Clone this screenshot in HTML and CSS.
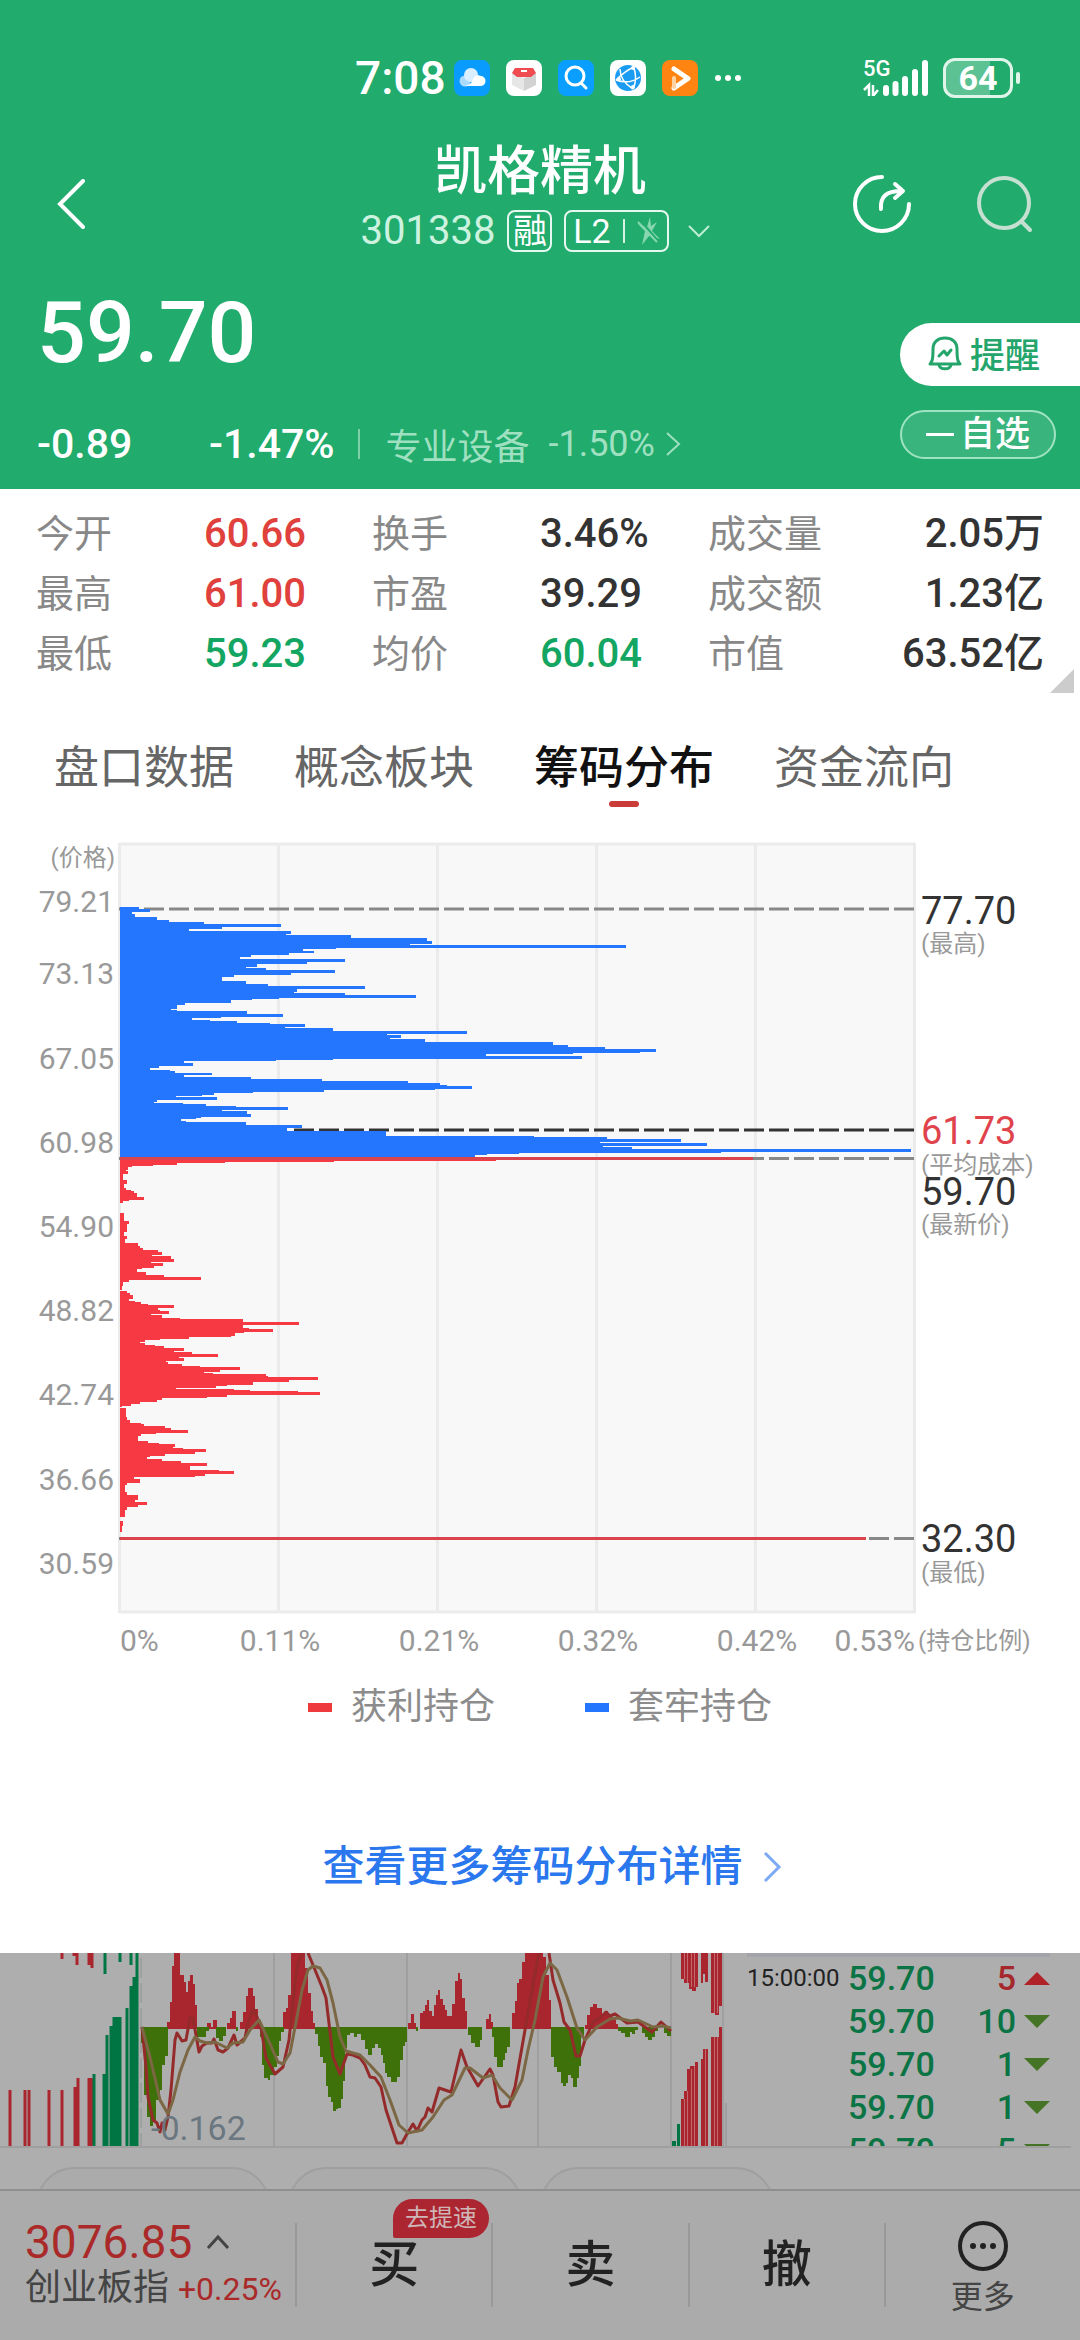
FILE: index.html
```html
<!doctype html>
<html lang="zh-CN">
  <head>
    <meta charset="UTF-8" />
    <meta name="viewport" content="width=device-width, initial-scale=1.0" />
    <title>凯格精机 301338 - 筹码分布</title>
    <link rel="stylesheet" href="styles.css">
  </head>
  <body>
    <header class="header">
      <div class="status">
        <div class="status-left">
          <span class="clock">7:08</span>
          <svg class="app" viewBox="0 0 36 36">
            <rect width="36" height="36" rx="8" fill="#0a9bff" />
            <circle cx="11" cy="21" r="5.500" fill="#a9dbff" />
            <circle cx="17" cy="15" r="7" fill="#d9efff" />
            <path d="M11 26h15a5 5 0 0 0 1-10c-4-2-7 1-8 3-1 4-4 6-8 7z" fill="#fff" />
          </svg>
          <svg class="app" viewBox="0 0 36 36">
            <rect width="36" height="36" rx="8" fill="#fff" />
            <path d="M6 13l12 5v13L6 25z" fill="#e6e6e6" />
            <path d="M30 13l-12 5v13l12-6z" fill="#d2d2d2" />
            <path d="M9 8h18l3 5-5 4H11l-5-4z" fill="#ef4b50" />
            <path d="M15 11h6" stroke="#fff" stroke-width="2" />
          </svg>
          <svg class="app" viewBox="0 0 36 36">
            <rect width="36" height="36" rx="8" fill="#0a9eff" />
            <circle cx="17" cy="16" r="9" fill="none" stroke="#fff" stroke-width="3" />
            <path d="M23 23l5 5" stroke="#fff" stroke-width="3" stroke-linecap="round" />
          </svg>
          <svg class="app" viewBox="0 0 36 36">
            <rect width="36" height="36" rx="8" fill="#fff" />
            <circle cx="18" cy="18" r="13" fill="#1b9cf2" />
            <path d="M6 20C12 14 17 10 24 7M10 9c0 9 5 15 13 20M23 5c3 8 4 16 0 24M6 20c8 3 17 2 24-3" fill="none" stroke="#fff" stroke-width="1.500" />
            <circle cx="23" cy="8" r="2" fill="#fff" />
            <circle cx="9" cy="19" r="2" fill="#fff" />
            <circle cx="23" cy="27" r="2" fill="#fff" />
          </svg>
          <svg class="app" viewBox="0 0 36 36">
            <rect width="36" height="36" rx="8" fill="#ff8412" />
            <path d="M12 9l14 9.500L12 28" fill="none" stroke="#fff" stroke-width="5" stroke-linejoin="round" stroke-linecap="round" />
            <path d="M12 18v9" stroke="#ffd2a3" stroke-width="4" stroke-linecap="round" />
          </svg>
          <svg class="dots" viewBox="0 0 28 8">
            <circle cx="4" cy="4" r="3" /><circle cx="14" cy="4" r="3" /><circle cx="24" cy="4" r="3" />
          </svg>
        </div>
        <div class="status-right">
          <div class="signal">
            <span class="net">5G</span>
            <svg class="bars" viewBox="0 0 66 36">
              <path d="M23 28v5M32.500 24v9M42 19v14M52 12v21M62 3v30" stroke="#fff" stroke-width="6" stroke-linecap="round" />
              <path d="M1 30l5-5v11M10 25v11l5-6" fill="none" stroke="#fff" stroke-width="2.500" />
            </svg>
          </div>
          <span class="battery">64</span>
        </div>
      </div>

      <nav class="nav">
        <button class="icon-btn back" aria-label="返回">
          <svg width="30" height="50" viewBox="0 0 30 50"><path d="M27 2L4 25l23 23" fill="none" stroke="#fff" stroke-width="4" stroke-linecap="round" /></svg>
        </button>
        <div class="title">
          <h1>凯格精机</h1>
          <div class="code">
            <span class="code-num">301338</span>
            <span class="tag tag-rong">融</span>
            <span class="tag tag-l2">L2
              <i></i>
              <svg width="24" height="28" viewBox="0 0 24 28"><path d="M13 0l-3 10-9-3 7 7-3 14 7-9 11 3-8-8 5-9-6 4z" fill="#86d6af" /><path d="M3 3l19 22" stroke="#21ab6d" stroke-width="2" /><path d="M1 5l19 20" stroke="#86d6af" stroke-width="2" /></svg>
            </span>
            <svg class="down" width="24" height="14" viewBox="0 0 24 14"><path d="M2 2l10 10L22 2" fill="none" stroke="#bdeed5" stroke-width="2" /></svg>
          </div>
        </div>
        <div class="nav-right">
          <button class="icon-btn" aria-label="分享">
            <svg width="60" height="60" viewBox="0 0 60 60" fill="none" stroke="#fff" stroke-width="4" stroke-linecap="round" stroke-linejoin="round">
              <path d="M30 3a27 27 0 1 0 27 27" />
              <path d="M29 35c-1-13 6-18 20-18M43 10l8 7-8 7" />
            </svg>
          </button>
          <button class="icon-btn" aria-label="搜索">
            <svg width="60" height="60" viewBox="0 0 60 60" fill="none" stroke="#c5e0d0" stroke-width="4" stroke-linecap="round">
              <circle cx="30" cy="29" r="25" />
              <path d="M48 48l8 8" />
            </svg>
          </button>
        </div>
      </nav>

      <section class="quote">
        <div class="quote-left">
          <div class="price">59.70</div>
          <div class="change">
            <span class="diff">-0.89</span>
            <span class="pct">-1.47%</span>
            <a class="sector" href="#sector">
              <span>专业设备</span>
              <span class="sector-pct">-1.50%</span>
              <svg width="16" height="24" viewBox="0 0 16 24"><path d="M2 1l12 11L2 23" fill="none" stroke="#9fe0c1" stroke-width="2" /></svg>
            </a>
          </div>
        </div>
        <div class="quote-right">
          <button class="remind">
            <svg width="34" height="36" viewBox="0 0 34 36" fill="none" stroke="#24a56b" stroke-width="3" stroke-linejoin="round" stroke-linecap="round">
              <path d="M2 29c2-2 3-4 3-15C5 7 10 3 17 3s12 4 12 11c0 11 1 13 3 15z" />
              <path d="M11 30c1 5 11 5 12 0M11 21l5-5 3 4 4-5" />
            </svg>
            提醒
          </button>
          <button class="fav"><i></i>自选</button>
        </div>
      </section>
    </header>

    <main class="sheet">
      <section class="stats">
        <table>
          <tr>
            <td>今开</td><td class="num up">60.66</td>
            <td>换手</td><td class="num">3.46%</td>
            <td>成交量</td><td class="num last">2.05万</td>
          </tr>
          <tr>
            <td>最高</td><td class="num up">61.00</td>
            <td>市盈</td><td class="num">39.29</td>
            <td>成交额</td><td class="num last">1.23亿</td>
          </tr>
          <tr>
            <td>最低</td><td class="num down-c">59.23</td>
            <td>均价</td><td class="num down-c">60.04</td>
            <td>市值</td><td class="num last">63.52亿</td>
          </tr>
        </table>
        <svg class="corner" viewBox="0 0 24 24"><path d="M24 0v24H0z" fill="#ccc" /></svg>
      </section>

      <div class="tabs">
        <button class="tab">盘口数据</button>
        <button class="tab">概念板块</button>
        <button class="tab active">筹码分布</button>
        <button class="tab">资金流向</button>
      </div>

      <!-- 筹码分布图 -->
      <svg class="chart" viewBox="0 830 1080 840">
        <rect x="119" y="843" width="796" height="769" fill="#f8f8f8" />
        <path class="grid" d="M119 844H915M119 1612H916M119.500 843V1613M278.500 843V1612M437.500 843V1612M596.500 843V1612M755.500 843V1612M914.500 843V1613" />
        <path class="dash" d="M119 909H914M119 1158.500H914M119 1538.500H914" />
        <path class="dash mean" d="M294 1130H914" />
        <!-- 套牢 -->
        <path fill="#2476ff" d="M120 907H139V909H150V912H132V914H135V917H157V920H169V922H204V924H281V927H222V929H189V931H291V934H286V935H351V938H427V941H432V944H410V945H626V948H336V949H303V951H314V953H289V955H251V957H240V959H345V962H307V964H257V967H246V968H266V970H335V973H291V975H234V977H222V981H246V984H268V986H365V989H297V992H294V993H345V995H416V998H279V999H252V1000H231V1003H185V1005H177V1009H171V1010H177V1011H247V1014H283V1017H221V1018H192V1020H210V1021H237V1023H270V1024H305V1027H285V1028H333V1031H467V1034H387V1035H401V1038H390V1039H425V1042H553V1045H568V1047H605V1049H656V1052H640V1053H573V1054H486V1056H582V1059H333V1060H276V1061H184V1063H193V1066H159V1068H150V1070H170V1071H175V1073H212V1075H184V1077H251V1079H322V1081H408V1083H440V1085H447V1086H472V1089H435V1090H324V1092H253V1093H214V1095H202V1096H176V1097H217V1100H157V1102H154V1103H183V1104H206V1106H236V1107H288V1110H222V1111H247V1114H251V1117H201V1118H196V1119H181V1121H186V1122H246V1125H302V1128H287V1131H386V1136H534V1137H607V1139H681V1142H600V1143H707V1146H603V1147H632V1149H911V1152H721V1153H519V1154H487V1155H475V1157H120Z" />
        <!-- 获利 -->
        <path fill="#f63942" d="M120 1157H753V1160H496V1161H334V1162H225V1163H177V1165H153V1166H132V1167H128V1170H126V1171H128V1174H123V1180H127V1184H124V1188H126V1190H131V1191H134V1193H137V1197H144V1200H129V1201H123V1203H120ZM120 1213H124V1221H129V1224H127V1232H124V1236H127V1239H125V1243H138V1246H140V1248H143V1250H158V1252H162V1255H152V1256H171V1259H174V1262H151V1263H163V1266H154V1268H142V1269H137V1272H146V1275H164V1277H201V1280H129V1282H123V1286H122V1290H120ZM120 1291H127V1293H130V1295H133V1299H129V1301H135V1302H141V1304H148V1305H174V1308H158V1310H160V1311H169V1314H151V1315H162V1318H180V1319H243V1322H299V1325H243V1328H249V1329H273V1332H244V1333H235V1336H231V1337H189V1339H160V1340H145V1342H140V1343H145V1345H155V1346H164V1348H184V1351H174V1352H192V1354H218V1357H179V1358H184V1361H166V1362H168V1364H182V1366H200V1367H240V1370H220V1372H204V1373H213V1374H266V1376H268V1377H318V1380H289V1382H253V1385H227V1386H216V1388H176V1389H234V1390H250V1391H298V1392H320V1395H227V1397H207V1398H162V1400H157V1402H140V1404H131V1406H122V1407H120ZM120 1408H126V1417H127V1420H130V1423H141V1424H144V1426H165V1428H171V1430H188V1433H156V1434H141V1436H138V1441H148V1443H159V1444H175V1447H173V1448H183V1449H206V1452H195V1454H165V1456H150V1457H147V1459H162V1461H181V1463H207V1466H190V1470H219V1471H234V1474H205V1476H195V1477H134V1479H140V1483H127V1485H125V1492H127V1495H138V1500H135V1502H147V1505H138V1507H127V1510H125V1517H120ZM120 1521H123V1526H122V1532H120ZM120 1537H866V1540H120Z" />
        <path d="M120 1158.500H753M120 1538.500H866" stroke="#d9434d" stroke-width="3" />

        <g class="axis" text-anchor="end">
          <text class="note" x="115" y="866">(价格)</text>
          <text x="114" y="912">79.21</text>
          <text x="114" y="984">73.13</text>
          <text x="114" y="1069">67.05</text>
          <text x="114" y="1153">60.98</text>
          <text x="114" y="1237">54.90</text>
          <text x="114" y="1321">48.82</text>
          <text x="114" y="1405">42.74</text>
          <text x="114" y="1490">36.66</text>
          <text x="114" y="1574">30.59</text>
        </g>
        <g class="marks">
          <text x="921" y="924">77.70</text>
          <text class="note" x="921" y="952">(最高)</text>
          <text class="note" x="921" y="1173">(平均成本)</text>
          <text class="avg" x="921" y="1144">61.73</text>
          <text x="921" y="1205">59.70</text>
          <text class="note" x="921" y="1233">(最新价)</text>
          <text x="921" y="1552">32.30</text>
          <text class="note" x="921" y="1581">(最低)</text>
        </g>
        <g class="axis" text-anchor="middle">
          <text x="120" y="1651" text-anchor="start">0%</text>
          <text x="280" y="1651">0.11%</text>
          <text x="439" y="1651">0.21%</text>
          <text x="598" y="1651">0.32%</text>
          <text x="757" y="1651">0.42%</text>
          <text x="915" y="1651" text-anchor="end">0.53%</text>
          <text class="note" x="918" y="1649" text-anchor="start">(持仓比例)</text>
        </g>
      </svg>

      <div class="legend">
        <span class="legend-item"><i class="red"></i>获利持仓</span>
        <span class="legend-item"><i class="blue"></i>套牢持仓</span>
      </div>

      <a class="more-link" href="#chips">
        查看更多筹码分布详情
        <svg width="20" height="32" viewBox="0 0 20 32"><path d="M3 2l14 14L3 30" fill="none" stroke="#7daaf4" stroke-width="3" /></svg>
      </a>
    </main>

    <!-- 遮罩下的分时页 -->
    <section class="under">
      <div class="under-main">
        <svg class="macd" viewBox="0 0 730 194">
          <path stroke="#9f9f9f" stroke-width="2" d="M274 0V194M407 0V194M538 0V194M671 0V194M723 0V194M726 150V194" />
          <path stroke="#9f9f9f" stroke-width="2" stroke-dasharray="20 5" d="M141 5V194" />
          <path stroke="#a9262f" stroke-width="3" d="M62 0V6M74 0V3M77 0V12M89 0V12M92 0V15M10 137V193M25 137V193M29 137V193M49 137V193M62 137V193M75 134V193M78 125V193M89 125V193M92 125V193" />
          <path stroke="#007544" stroke-width="3" d="M105 0V21M120 0V9M131 0V12M94 121V193M104 121V193M107 82V193M111 73V193M114 64V193M117 64V193M120 64V193M127 55V193M131 33V193M134 24V193M137 0V193" />
          <g fill="#a9262f">
            <path d="M167 76V69H170V49H172V13H174V0H180V22H184V29H186V39H188V28H190V22H193V31H195V52H197V76ZM207 76V70H211V74H213V67H217V76ZM227 76V70H230V65H232V58H236V76ZM240 76V69H243V59H246V43H248V35H253V43H255V56H258V67H261V76ZM283 76V59H286V55H288V42H291V0H305V15H308V40H311V58H313V70H315V76Z" />
            <path d="M408 76V70H411V61H414V70H416V76ZM420 76V60H423V58H425V52H427V47H429V58H432V63H434V52H436V42H438V37H440V46H443V52H445V57H447V63H452V51H455V28H458V20H460V26H462V45H465V58H467V76ZM486 76V66H489V61H491V69H493V76ZM512 76V60H515V48H517V30H519V26H522V9H525V0H543V4H546V22H549V47H551V76ZM585 76V72H587V62H590V54H593V51H597V55H602V62H605V58H608V63H612V66H616V71H618V76Z" />
            <path d="M681 0V26H684V30H689V36H692V38H696V34H698V0ZM701 0V30H703V21H705V29H708V0ZM711 0V60H715V62H719V53H722V0ZM681 193V146H684V138H687V116H690V113H695V109H698V193ZM701 193V106H703V96H708V193ZM711 193V84H719V74H722V193Z" />
          </g>
          <path stroke="#c0696e" stroke-width="1" d="M684.500 0V26M687.500 0V30M691.500 0V34M694.500 0V34M684.500 146V193M687.500 138V193M691.500 116V193M694.500 113V193M705.500 96V193M714.500 0V60M717.500 0V60M714.500 84V193M717.500 84V193" />
          <g fill="#3e7109">
            <path d="M141 74V90H144V142H147V164H150V173H153V167H156V147H160V137H162V112H165V103H168V74ZM197 74V84H206V78H209V74ZM216 74V85H219V88H223V83H226V74ZM236 74V78H238V74ZM260 74V84H262V112H264V125H268V127H270V122H274V114H277V103H279V88H281V79H284V74ZM315 74V81H318V93H320V104H323V110H326V133H328V144H331V149H333V158H336V156H338V155H341V146H343V128H345V95H347V82H350V80H354V84H357V81H361V87H365V96H368V102H372V95H375V91H378V95H381V102H383V110H385V120H387V124H391V129H397V124H400V107H403V93H405V89H407V74Z" />
            <path d="M416 74V78H418V74ZM468 74V82H471V90H475V94H480V87H482V74ZM492 74V84H494V104H497V114H503V107H505V100H507V94H510V74ZM551 74V104H554V114H557V119H561V130H563V133H566V130H568V122H571V125H573V134H577V125H579V113H581V84H584V74ZM618 74V78H621V80H625V84H630V79H632V81H635V77H638V74ZM642 74V80H645V84H648V87H652V84H655V78H658V74ZM664 74V80H667V83H671V74Z" />
          </g>
          <path fill="#007544" d="M672 193V188H676V193ZM677 193V171H680V193Z" />
          <polyline class="line dif" points="142,74 146,114 148,144 153,167 157,170 160,179 162,170 165,177 168,164 171,137 175,87 177,80 182,88 186,87 190,65 193,65 199,99 202,93 207,90 212,90 214,86 218,97 223,99 228,95 234,82 237,92 245,85 248,70 253,56 257,64 261,75 266,105 275,121 283,114 289,87 295,30 298,9 303,0" />
          <polyline class="line dif" points="308,0 313,12 322,34 326,45 333,104 340,121 347,101 353,102 360,105 365,112 370,124 375,125 381,134 386,157 397,190 402,190 408,179 413,171 417,178 422,167 425,164 428,155 432,159 439,135 451,139 461,97 467,114 478,133 490,116 493,122 498,149 501,154 509,153 515,134 525,77 532,37 538,4 540,0" />
          <polyline class="line dif" points="549,0 553,27 560,50 564,69 570,77 576,103 580,103 585,87 593,69 600,65 606,59 610,63 615,61 627,70 638,69 652,79 661,69 671,78" />
          <polyline class="line dea" points="142,74 150,104 160,147 168,161 173,147 180,119 188,97 195,84 200,88 207,90 215,89 227,95 233,90 243,89 250,77 259,67 267,84 278,109 283,111 290,100 297,64 302,37 308,17 313,13 320,15 327,27 333,50 340,84 346,98 360,102 370,112 381,124 390,147 399,172 408,180 422,177 433,164 444,147 452,142 465,115 470,115 483,125 492,122 500,135 512,147 522,127 528,97 535,67 543,24 550,10 557,17 567,44 577,75 585,87 597,74 610,66 618,65 630,68 638,67 653,74 663,73 671,75" />
          <text class="macd-min" x="151" y="187">-0.162</text>
        </svg>
        <table class="ticks">
          <tr><td class="time">15:00:00</td><td>59.70</td><td class="vol red-c">5</td><td class="arrow"><svg width="26" height="13" viewBox="0 0 26 13"><path d="M13 0l13 13H0z" fill="#b02228" /></svg></td></tr>
          <tr><td></td><td>59.70</td><td class="vol">10</td><td class="arrow"><svg width="26" height="13" viewBox="0 0 26 13"><path d="M0 0h26L13 13z" fill="#457426" /></svg></td></tr>
          <tr><td></td><td>59.70</td><td class="vol">1</td><td class="arrow"><svg width="26" height="13" viewBox="0 0 26 13"><path d="M0 0h26L13 13z" fill="#457426" /></svg></td></tr>
          <tr><td></td><td>59.70</td><td class="vol">1</td><td class="arrow"><svg width="26" height="13" viewBox="0 0 26 13"><path d="M0 0h26L13 13z" fill="#457426" /></svg></td></tr>
          <tr><td></td><td>59.70</td><td class="vol">5</td><td class="arrow"><svg width="26" height="13" viewBox="0 0 26 13"><path d="M0 0h26L13 13z" fill="#457426" /></svg></td></tr>
        </table>
      </div>
      <div class="pills"><i></i><i></i><i></i></div>
    </section>

    <footer class="bottom">
      <a class="index" href="#index">
        <span class="index-top">3076.85
          <svg width="24" height="16" viewBox="0 0 24 16"><path d="M2 14L12 3l10 11" fill="none" stroke="#444" stroke-width="3" /></svg>
        </span>
        <span class="index-sub">创业板指 <b>+0.25%</b></span>
      </a>
      <button class="act">买<span class="speed">去提速</span></button>
      <button class="act">卖</button>
      <button class="act">撤</button>
      <button class="act more">
        <svg width="52" height="52" viewBox="0 0 52 52"><circle cx="26" cy="26" r="23" fill="none" stroke="#222" stroke-width="4" /><circle cx="16" cy="26" r="3" fill="#222" /><circle cx="26" cy="26" r="3" fill="#222" /><circle cx="36" cy="26" r="3" fill="#222" /></svg>
        更多
      </button>
    </footer>
  </body>
</html>
```
FILE: styles.css
```css
* {
  margin: 0;
  padding: 0;
  box-sizing: border-box;
}

body {
  font-family: Roboto, "Noto Sans CJK SC", sans-serif;
  background: #fff;
  color: #333;
}

button {
  border: none;
  background: none;
  font: inherit;
  color: inherit;
}

a {
  color: inherit;
  text-decoration: none;
}

svg {
  display: block;
  flex-shrink: 0;
}

/* 顶部 */
.header {
  background: #21ab6d;
  color: #fff;
}

.status {
  display: flex;
  justify-content: space-between;
  padding: 56px 67px 36px 355px;
}

.status-left,
.status-right {
  display: flex;
  align-items: center;
  height: 44px;
}

.clock {
  font-size: 46px;
  font-weight: 500;
  line-height: 44px;
  margin-right: 8px;
}

.app {
  width: 36px;
  height: 36px;
  margin-right: 16px;
}

.dots {
  width: 28px;
  height: 8px;
  fill: #fff;
}

.status-right {
  gap: 14px;
}

.signal {
  position: relative;
}

.bars {
  width: 66px;
  height: 36px;
}

.net {
  position: absolute;
  left: 0;
  top: -3px;
  font-size: 22px;
  font-weight: 500;
  line-height: 24px;
}

.battery {
  position: relative;
  width: 70px;
  height: 40px;
  border: 3px solid #dff5ea;
  border-radius: 12px;
  background: linear-gradient(90deg, #5dc293 68%, #21ab6d 68%);
  font-size: 34px;
  font-weight: 700;
  line-height: 35px;
  text-align: center;
}

.battery::after {
  content: "";
  position: absolute;
  right: -10px;
  top: 11px;
  width: 4px;
  height: 12px;
  border-radius: 2px;
  background: #dff5ea;
}

.nav {
  display: grid;
  grid-template-columns: 1fr auto 1fr;
  align-items: center;
  height: 136px;
  padding: 0 46px;
}

.back {
  padding-left: 10px;
}

.title {
  align-self: start;
  padding-top: 2px;
  text-align: center;
}

.title h1 {
  font-size: 53px;
  font-weight: 500;
  line-height: 68px;
}

.code {
  display: flex;
  align-items: center;
  justify-content: center;
  margin: 4px 8px 0 0;
}

.code-num {
  font-size: 40px;
  line-height: 42px;
  color: #cdf3e0;
  margin-right: 12px;
}

.tag {
  display: flex;
  align-items: center;
  justify-content: center;
  height: 42px;
  border: 2px solid #e5f8ef;
  border-radius: 8px;
  font-size: 34px;
  line-height: 38px;
}

.tag-rong {
  width: 45px;
  margin-right: 12px;
}

.tag-l2 {
  width: 105px;
  gap: 12px;
}

.tag-l2 i {
  width: 2px;
  height: 24px;
  background: #d5f3e4;
}

.down {
  margin-left: 18px;
}

.nav-right {
  display: flex;
  justify-content: flex-end;
  gap: 62px;
}

.back {
  justify-self: start;
}

.quote {
  display: flex;
  justify-content: space-between;
}

.quote-left {
  padding: 19px 0 25px 37px;
}

.price {
  font-size: 86px;
  font-weight: 500;
  line-height: 84px;
}

.change {
  display: flex;
  align-items: center;
  height: 40px;
  margin-top: 49px;
  font-size: 41px;
  font-weight: 500;
}

.diff {
  width: 172px;
}

.pct {
  padding-right: 24px;
}

.sector {
  display: flex;
  align-items: center;
  border-left: 2px solid #7ed0a8;
  padding-left: 25px;
  height: 30px;
  font-size: 36px;
  font-weight: 400;
  color: #9fe0c1;
}

.sector-pct {
  margin: 0 10px 0 19px;
}

.quote-right {
  display: flex;
  flex-direction: column;
  gap: 24px;
  width: 180px;
  padding-top: 51px;
}

.remind {
  display: flex;
  align-items: center;
  gap: 8px;
  height: 63px;
  padding: 0 0 4px 28px;
  border-radius: 32px 0 0 32px;
  background: #fff;
  color: #24a56b;
  font-size: 35px;
  font-weight: 500;
}

.fav {
  display: flex;
  align-items: center;
  justify-content: center;
  gap: 6px;
  width: 156px;
  height: 49px;
  border: 2px solid #9fe3c2;
  border-radius: 25px;
  background: #39b47d;
  font-size: 35px;
  font-weight: 500;
  line-height: 45px;
}

.fav i {
  width: 28px;
  height: 3px;
  background: #fff;
}

/* 行情数据 */
.stats {
  position: relative;
  padding: 15px 36px 0 36px;
}

.stats table {
  width: 100%;
  border-collapse: collapse;
  table-layout: fixed;
}

.stats td {
  width: 168px;
  height: 60px;
  font-size: 38px;
  line-height: 60px;
  color: #888;
  white-space: nowrap;
}

.stats td.num {
  font-size: 40px;
  font-weight: 500;
  color: #333;
}

.stats td.last {
  width: auto;
  text-align: right;
}

.stats td.up {
  color: #e0413c;
}

.stats td.down-c {
  color: #13a562;
}

.corner {
  position: absolute;
  right: 6px;
  bottom: -9px;
  width: 24px;
  height: 24px;
}

.tabs {
  display: flex;
  gap: 60px;
  padding: 55px 54px 0;
}

.tab {
  display: flex;
  flex-direction: column;
  align-items: center;
  gap: 2px;
  font-size: 45px;
  line-height: 60px;
  color: #666;
}

.tab::after {
  content: "";
  width: 30px;
  height: 6px;
  border-radius: 3px;
}

.tab.active {
  color: #111;
  font-weight: 500;
}

.tab.active::after {
  background: #c93c37;
}

/* 图表 */
.chart {
  width: 100%;
  margin-top: 23px;
}

.grid {
  fill: none;
  stroke: #ebebeb;
  stroke-width: 3px;
}

.dash {
  fill: none;
  stroke: #888;
  stroke-width: 3px;
  stroke-dasharray: 20 5;
}

.dash.mean {
  stroke: #333;
}

.axis text {
  font-size: 30px;
  fill: #999;
}

.marks text {
  font-size: 38px;
  fill: #333;
}

.marks .avg {
  fill: #e0434b;
}

.chart text.note {
  font-size: 24px;
  fill: #999;
}

.legend {
  display: flex;
  justify-content: center;
  gap: 90px;
  margin-top: 17px;
  font-size: 36px;
  line-height: 40px;
  color: #8c8c8c;
}

.legend-item {
  display: flex;
  align-items: center;
  gap: 19px;
}

.legend i {
  width: 24px;
  height: 9px;
}

.legend .red {
  background: #ee3a3c;
}

.legend .blue {
  background: #2476ff;
}

.more-link {
  display: flex;
  align-items: center;
  justify-content: center;
  gap: 19px;
  margin-top: 115px;
  padding: 0 0 61px 24px;
  font-size: 42px;
  font-weight: 500;
  line-height: 50px;
  color: #2a77ee;
}

/* 遮罩下内容 */
.under {
  background: #aeaeae;
}

.under-main {
  display: flex;
  justify-content: space-between;
  height: 195px;
  margin: 0 9px 0 0;
  padding-right: 21px;
  border-bottom: 2px solid #9f9f9f;
  overflow: hidden;
}

.macd {
  width: 730px;
  height: 194px;
}

.line {
  fill: none;
  stroke-width: 3px;
  stroke-linejoin: round;
}

.dif {
  stroke: #952a2b;
}

.dea {
  stroke: #7b6744;
}

.macd-min {
  font-size: 34px;
  fill: #6b7780;
}

.ticks {
  width: 303px;
  height: 219px;
  border-collapse: collapse;
  border-top: 4px solid #a3a4a9;
}

.ticks td {
  height: 43px;
  font-size: 34px;
  font-weight: 500;
  line-height: 43px;
  color: #0b7444;
  white-space: nowrap;
}

.ticks td.time {
  width: 101px;
  font-size: 24px;
  font-weight: 400;
  color: #222;
}

.ticks td.vol {
  text-align: right;
}

.ticks td.red-c {
  color: #a5282d;
}

.ticks .arrow {
  width: 34px;
}

.ticks .arrow svg {
  margin-left: auto;
}

.pills {
  display: flex;
  gap: 18px;
  height: 41px;
  padding: 19px 36px 0;
  overflow: hidden;
}

.pills i {
  width: 234px;
  height: 76px;
  border: 2px solid #9f9f9f;
  border-radius: 38px;
  background: #ababab;
}

.bottom {
  display: flex;
  height: 151px;
  padding: 32px 0 33px;
  border-top: 2px solid #8f8f8f;
  background: #ababab;
  color: #222;
}

.index {
  width: 295px;
  padding-left: 25px;
}

.index-top {
  display: flex;
  align-items: center;
  gap: 14px;
  font-size: 46px;
  line-height: 38px;
  color: #aa2a2a;
}

.index-sub {
  display: block;
  margin-top: 5px;
  font-size: 36px;
  line-height: 44px;
  color: #444;
  white-space: nowrap;
}

.index-sub b {
  font-size: 32px;
  font-weight: 400;
  color: #aa2a2a;
}

.act {
  position: relative;
  flex: 1;
  border-left: 2px solid #999;
  font-size: 50px;
  font-weight: 500;
  line-height: 84px;
}

.speed {
  position: absolute;
  left: 96px;
  top: -24px;
  padding: 0 12px;
  border-radius: 20px 20px 20px 2px;
  background: #ac2631;
  color: #ceb5b6;
  font-size: 24px;
  font-weight: 400;
  line-height: 39px;
}

.more {
  display: flex;
  flex-direction: column;
  align-items: center;
  justify-content: flex-start;
  font-size: 32px;
  font-weight: 400;
  line-height: 48px;
  color: #444;
}

.more svg {
  margin: -3px 0 1px;
}
```
